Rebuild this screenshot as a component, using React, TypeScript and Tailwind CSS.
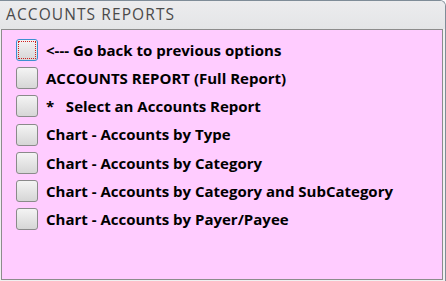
import React from "react";

const items = [
  "<--- Go back to previous options",
  "ACCOUNTS REPORT (Full Report)",
  "*   Select an Accounts Report",
  "Chart - Accounts by Type",
  "Chart - Accounts by Category",
  "Chart - Accounts by Category and SubCategory",
  "Chart - Accounts by Payer/Payee",
];

function Box({ focused }: { focused?: boolean }) {
  return (
    <div
      className={
        "relative w-[22px] h-[22px] shrink-0 rounded-[3px] border bg-gradient-to-b from-[#f4f4f4] to-[#d6d6d6] " +
        (focused ? "border-[#3c8fd0]" : "border-[#8a8a8a]")
      }
    >
      {focused && (
        <div className="absolute inset-[1px] border border-dotted border-[#d02020]" />
      )}
    </div>
  );
}

export default function App() {
  return (
    <div className="w-[446px] h-[281px] bg-[#f0f0f0] border-t border-r border-[#7f8c98] rounded-tr-[6px] flex flex-col overflow-hidden">
      <div
        className="h-[28px] pl-[6px] flex items-center bg-gradient-to-b from-[#ececee] to-[#e4e5e7] text-[#4a4a4a] text-[15.5px] tracking-[1.1px] leading-none"
        style={{ fontFamily: '"Open Sans", "Liberation Sans", sans-serif' }}
      >
        ACCOUNTS REPORTS
      </div>
      <div className="flex-1 mr-[2px] mb-[1px] ml-[1px] bg-[#ffccff] border border-[#8c8c8c] pt-[9px] pl-[14px] flex flex-col gap-[6.2px]">
        {items.map((t, i) => (
          <div key={i} className="flex items-center h-[22px] gap-[8px]">
            <Box focused={i === 0} />
            <span
              className="text-black font-bold text-[15px] whitespace-pre"
              style={{ fontFamily: '"Open Sans", "Liberation Sans", sans-serif' }}
            >
              {t}
            </span>
          </div>
        ))}
      </div>
    </div>
  );
}
